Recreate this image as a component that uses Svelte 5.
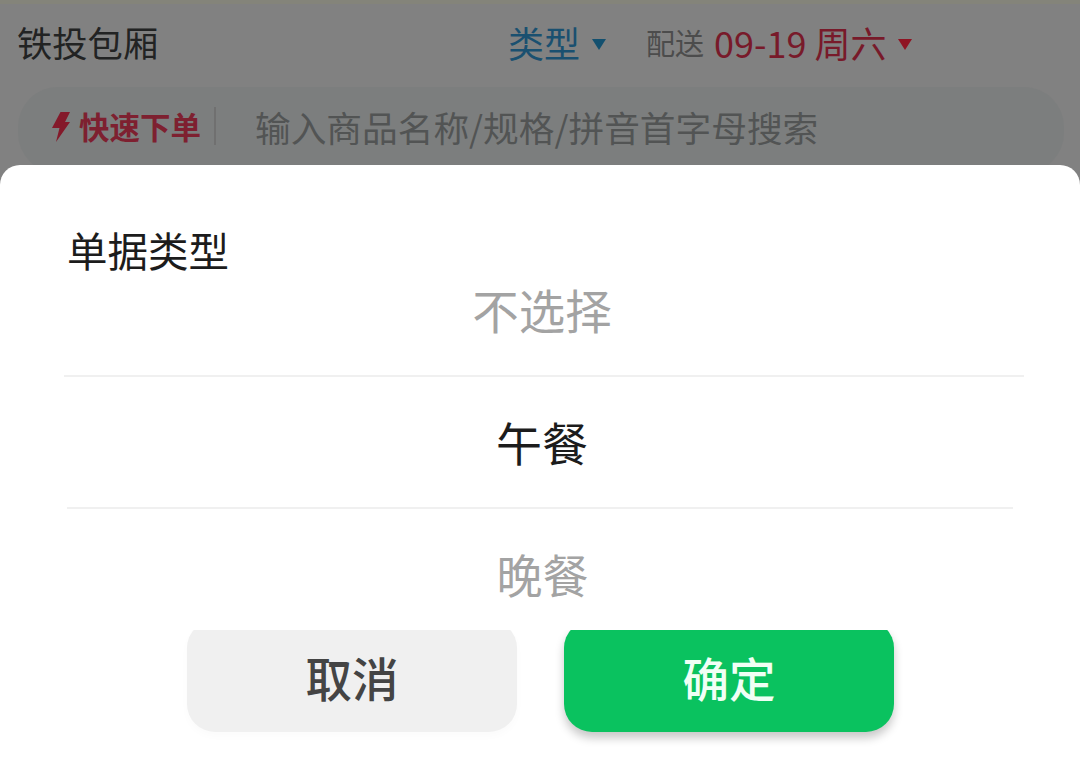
<script>
  const options = [
    { label: '不选择', cls: 'muted first' },
    { label: '午餐', cls: 'active' },
    { label: '晚餐', cls: 'muted last' }
  ];
</script>

<div class="page">
  <header class="top">
    <div class="strip"></div>
    <div class="bar">
      <span class="title">铁投包厢</span>
      <span class="type">类型</span>
      <svg class="caret c1" viewBox="0 0 14 11" width="14" height="11"><path d="M0 0H14L7 11Z" fill="#13506f"/></svg>
      <span class="ship">配送</span>
      <span class="date">09-19 周六</span>
      <svg class="caret c2" viewBox="0 0 14 11" width="14" height="11"><path d="M0 0H14L7 11Z" fill="#8f1423"/></svg>
    </div>
    <div class="search">
      <div class="quick-zone">
        <svg class="bolt" viewBox="0 0 18 30" width="18" height="30"><path d="M8.500 0H18L13 10H18L4 30L7.500 16H0Z" fill="#84192a"/></svg>
        <span class="quick">快速下单</span>
        <span class="sep"></span>
      </div>
      <span class="ph">输入商品名称/规格/拼音首字母搜索</span>
    </div>
  </header>

  <section class="sheet">
    <h2 class="heading">单据类型</h2>
    <div class="picker">
      {#each options as o}
        <div class="opt {o.cls}">{o.label}</div>
      {/each}
    </div>
    <div class="actions">
      <button class="btn cancel">取消</button>
      <button class="btn ok">确定</button>
    </div>
  </section>
</div>

<style>
  :global(body) {
    margin: 0;
    background: #818181;
  }
  .page {
    width: 1080px;
    height: 765px;
    overflow: hidden;
    display: flex;
    flex-direction: column;
    font-family: "Noto Sans CJK SC", "Noto Sans", sans-serif;
    background: #818181;
  }
  .top {
    height: 165px;
    flex: none;
    overflow: hidden;
  }
  .strip {
    height: 4px;
    background: #84847a;
  }
  .bar {
    height: 81px;
    box-sizing: border-box;
    padding: 0 0 5px 17px;
    display: flex;
    align-items: center;
    line-height: 1;
  }
  .title {
    font-size: 35.300px;
    color: #222323;
    width: 491px;
  }
  .type {
    font-size: 36px;
    color: #1a5070;
  }
  .caret {
    flex: none;
    margin-top: 4px;
  }
  .c1 { margin-left: 12px; margin-right: 40px; }
  .ship {
    font-size: 29px;
    color: #4c4c4c;
  }
  .date {
    font-size: 36px;
    color: #781a2a;
    margin-left: 10px;
  }
  .c2 { margin-left: 11px; }
  .search {
    margin: 2px 16px 0 18px;
    height: 86px;
    box-sizing: border-box;
    border-radius: 40px;
    background: #7c7e7e;
    display: flex;
    align-items: center;
    padding-bottom: 8px;
  }
  .quick-zone {
    display: flex;
    align-items: center;
    padding-left: 34px;
  }
  .bolt {
    flex: none;
    margin-top: 1px;
  }
  .quick {
    margin-left: 9px;
    font-size: 30.500px;
    font-weight: 700;
    color: #7e2030;
  }
  .sep {
    width: 2px;
    height: 38px;
    margin-left: 13px;
    background: #707070;
  }
  .ph {
    margin-left: 39px;
    font-size: 35.700px;
    color: #525454;
    white-space: nowrap;
  }
  .sheet {
    flex: 1;
    background: #fff;
    border-radius: 20px 20px 0 0;
    display: flex;
    flex-direction: column;
    min-height: 0;
  }
  .heading {
    margin: 61px 0 1px 67px;
    font-size: 40.500px;
    font-weight: 400;
    line-height: 48px;
    color: #1c1c1c;
  }
  .picker {
    position: relative;
    z-index: 1;
    height: 355px;
    background: #fff;
    display: flex;
    flex-direction: column;
  }
  .opt {
    text-align: center;
    font-size: 46px;
    line-height: 60px;
  }
  .first {
    height: 102px;
    box-sizing: border-box;
    padding: 4px 4px 0 0;
    margin: 0 56px 0 64px;
    border-bottom: 2px solid #f0f0f0;
    font-size: 46.500px;
  }
  .active {
    height: 132px;
    box-sizing: border-box;
    margin: 0 67px;
    padding: 34px 0 0 4px;
    border-bottom: 2px solid #f0f0f0;
    color: #1c1c1c;
  }
  .last { padding: 34px 0 0 5px; }
  .muted { color: #a3a3a3; }
  .actions {
    display: flex;
    justify-content: center;
    gap: 47px;
    padding-left: 1px;
    margin-top: -10px;
  }
  .btn {
    width: 330px;
    height: 112px;
    border: 0;
    border-radius: 28px;
    font-family: inherit;
    font-size: 46.500px;
    font-weight: 500;
    padding: 0;
  }
  .cancel {
    background: #f0f0f0;
    color: #444;
    box-shadow: 0 4px 8px rgba(0,0,0,.02);
  }
  .ok {
    background: #0ac25f;
    color: #f0fff5;
    box-shadow: 0 6px 10px rgba(0,0,0,.22);
  }
</style>
